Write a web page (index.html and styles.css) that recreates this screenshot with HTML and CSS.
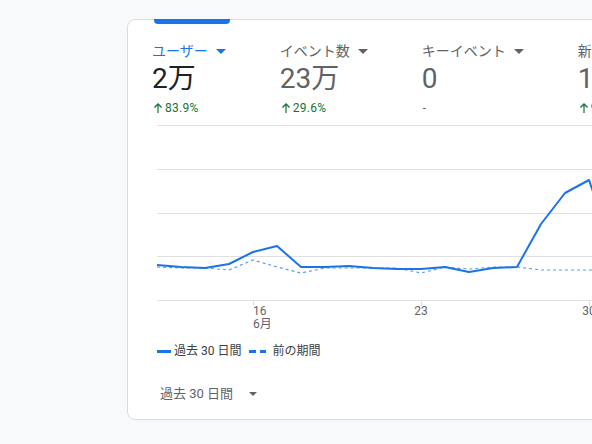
FILE: index.html
```html
<!DOCTYPE html>
<html lang="ja">
<head>
<meta charset="utf-8">
<link rel="stylesheet" href="styles.css">
</head>
<body>
<div class="card">
  <div class="tab-indicator"></div>
  <div class="metrics">
    <div class="metric selected">
      <div class="label">ユーザー<svg class="caret" width="10" height="5" viewBox="0 0 10 5"><polygon points="0,0 10,0 5,5"/></svg></div>
      <div class="value">2万</div>
      <div class="delta"><svg class="arrow" width="8" height="10" viewBox="0 0 8 10"><path d="M4 0 L8 4 L7.1 4.9 L4.6 2.4 L4.6 10 L3.4 10 L3.4 2.4 L0.9 4.9 L0 4 Z"/></svg>83.9%</div>
    </div>
    <div class="metric">
      <div class="label">イベント数<svg class="caret" width="10" height="5" viewBox="0 0 10 5"><polygon points="0,0 10,0 5,5"/></svg></div>
      <div class="value">23万</div>
      <div class="delta"><svg class="arrow" width="8" height="10" viewBox="0 0 8 10"><path d="M4 0 L8 4 L7.1 4.9 L4.6 2.4 L4.6 10 L3.4 10 L3.4 2.4 L0.9 4.9 L0 4 Z"/></svg>29.6%</div>
    </div>
    <div class="metric">
      <div class="label">キーイベント<svg class="caret" width="10" height="5" viewBox="0 0 10 5"><polygon points="0,0 10,0 5,5"/></svg></div>
      <div class="value">0</div>
      <div class="delta none">-</div>
    </div>
    <div class="metric">
      <div class="label">新規ユーザー数<svg class="caret" width="10" height="5" viewBox="0 0 10 5"><polygon points="0,0 10,0 5,5"/></svg></div>
      <div class="value">1.9万</div>
      <div class="delta"><svg class="arrow" width="8" height="10" viewBox="0 0 8 10"><path d="M4 0 L8 4 L7.1 4.9 L4.6 2.4 L4.6 10 L3.4 10 L3.4 2.4 L0.9 4.9 L0 4 Z"/></svg>90.1%</div>
    </div>
  </div>
  <svg class="chart" width="470" height="208" viewBox="0 0 470 208">
    <g class="grid">
      <line x1="0" y1="0.5" x2="470" y2="0.5"/>
      <line x1="0" y1="44.5" x2="470" y2="44.5"/>
      <line x1="0" y1="88.5" x2="470" y2="88.5"/>
      <line x1="0" y1="131.5" x2="470" y2="131.5"/>
      <line x1="0" y1="175.5" x2="470" y2="175.5"/>
      <line x1="96.5" y1="175.5" x2="96.5" y2="181"/>
      <line x1="264.5" y1="175.5" x2="264.5" y2="181"/>
      <line x1="432.5" y1="175.5" x2="432.5" y2="181"/>
    </g>
    <polyline class="prev" points="0,142 24,143 48,143 72,145 96,135 120,142 144,148 168,143 192,143 216,143 240,143 264,148 288,142 312,144 336,142 360,142 384,145 408,145 432,145 456,145"/>
    <polyline class="current" points="0,140 24,142 48,143 72,139 96,127 120,121 144,142 168,142 192,141 216,143 240,144 264,144 288,142 312,147 336,143 360,142 384,99 408,68 432,55 456,125"/>
    <g class="axis">
      <text x="96" y="190">16</text>
      <text x="96" y="203">6月</text>
      <text x="264" y="190" text-anchor="middle">23</text>
      <text x="432" y="190" text-anchor="middle">30</text>
    </g>
  </svg>
  <div class="legend">
    <span class="key solid"></span><span class="legend-text">過去 30 日間</span>
    <span class="key dashed"><i></i><i></i></span><span class="legend-text">前の期間</span>
  </div>
  <div class="range">過去 30 日間<svg class="range-caret" width="8" height="4" viewBox="0 0 8 4"><polygon points="0,0 8,0 4,4"/></svg></div>
</div>
</body>
</html>
```
FILE: styles.css
```css
html, body {
  margin: 0;
  padding: 0;
}
body {
  background: #f8f9fa;
  width: 592px;
  height: 444px;
  overflow: hidden;
  font-family: Roboto, "Noto Sans CJK JP", sans-serif;
  color: #3c4043;
}
.card {
  margin: 19px 0 0 127px;
  width: 560px;
  background: #fff;
  border: 1px solid #dadce0;
  border-radius: 8px;
  padding-bottom: 15px;
}
.tab-indicator {
  margin: -1px 0 0 26px;
  width: 76px;
  height: 5px;
  background: #1a73e8;
  border-radius: 0 0 4px 4px;
}
.metrics {
  display: flex;
  gap: 54px;
  padding: 17px 0 0 24px;
  white-space: nowrap;
}
.metric {
  display: flex;
  flex-direction: column;
}
.label {
  font-size: 14px;
  line-height: 20px;
  color: #5f6368;
  display: flex;
  align-items: center;
}
.caret {
  margin-left: 8px;
  fill: #5f6368;
}
.selected .label {
  color: #1a73e8;
}
.selected .caret {
  fill: #1a73e8;
}
.value {
  font-size: 28px;
  line-height: 36px;
  color: #5f6368;
}
.selected .value {
  color: #202124;
}
.delta {
  margin-top: 3px;
  font-size: 12px;
  line-height: 16px;
  color: #137333;
  display: flex;
  align-items: center;
  letter-spacing: 0.3px;
}
.delta.none {
  color: #5f6368;
  padding-left: 1px;
}
.arrow {
  fill: #137333;
  margin: 0 3px 0 2px;
}
.chart {
  display: block;
  margin: 9px 0 0 29px;
  overflow: hidden;
}
.grid line {
  stroke: #e0e0e0;
  stroke-width: 1;
}
.current {
  fill: none;
  stroke: #1a73e8;
  stroke-width: 2;
  stroke-linejoin: round;
}
.prev {
  fill: none;
  stroke: #5b9cf0;
  stroke-width: 1.2;
  stroke-dasharray: 3 3;
}
.axis text {
  font-family: Roboto, "Noto Sans CJK JP", sans-serif;
  font-size: 12px;
  fill: #5f6368;
}
.legend {
  margin: 10px 0 0 29px;
  display: flex;
  align-items: center;
  font-size: 12px;
  line-height: 16px;
  color: #3c4043;
}
.key {
  display: inline-flex;
  width: 14px;
  height: 3px;
  margin-right: 3px;
}
.key.solid {
  background: #1a73e8;
}
.key.dashed {
  width: 17px;
  gap: 4px;
  margin-left: 8px;
  margin-right: 6px;
}
.key.dashed i {
  flex: 1;
  background: #1a73e8;
}
.range {
  margin: 25px 0 0 32px;
  font-size: 13px;
  line-height: 20px;
  color: #5f6368;
  display: flex;
  align-items: center;
}
.range-caret {
  margin-left: 16px;
  fill: #5f6368;
}
```
